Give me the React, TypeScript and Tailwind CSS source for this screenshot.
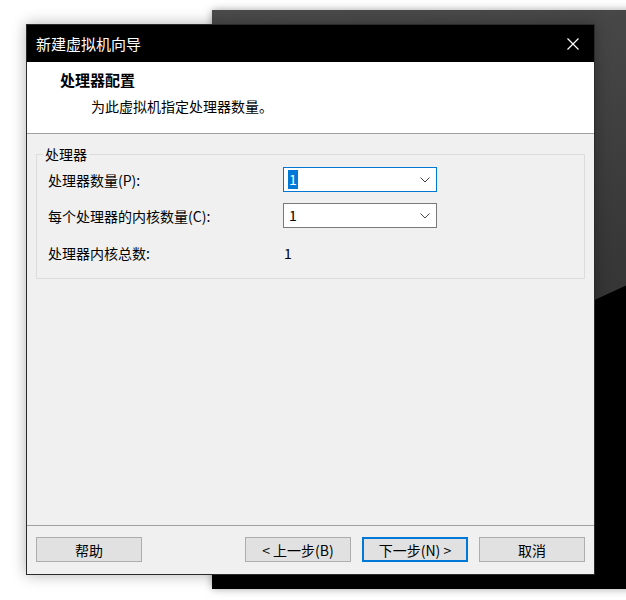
const font = "font-['Noto_Sans_CJK_SC','Noto_Sans',sans-serif]";

const Chevron = () => (
  <svg width="10" height="6" viewBox="0 0 10 6" className="text-[#444]">
    <path d="M0.5 0.5 L5 5 L9.5 0.5" fill="none" stroke="currentColor" strokeWidth="1" />
  </svg>
);

const Combo = ({ focused }: { focused?: boolean }) => (
  <div
    className={`w-[154px] h-[25px] bg-white border flex items-center justify-between pl-[4px] pr-[6px] ${
      focused ? "border-[#0078d7]" : "border-[#7a7a7a]"
    }`}
  >
    <span
      className={`text-[14px] leading-[19px] px-[1px] ${
        focused ? "bg-[#0078d7] text-white" : "text-black"
      }`}
    >
      1
    </span>
    <Chevron />
  </div>
);

const Button = ({ label, primary }: { label: string; primary?: boolean }) => (
  <button
    className={`w-[106px] h-[25px] bg-[#e1e1e1] text-[14px] leading-none text-black flex items-center justify-center ${
      primary ? "border-2 border-[#0078d7]" : "border border-[#adadad]"
    }`}
  >
    {label}
  </button>
);

export default function App() {
  return (
    <div className={`relative w-[626px] h-[600px] bg-white overflow-hidden ${font}`}>
      {/* window behind */}
      <div className="absolute left-[212px] top-[10px] w-[430px] h-[579px] bg-black shadow-[0_0_8px_rgba(0,0,0,0.35)]">
        <div className="absolute inset-0 bg-[linear-gradient(172deg,#4b4b4b_0%,#3a3a3a_40%,#252525_100%)] [clip-path:polygon(0_0,100%_0,100%_268px,0_467px)]" />
      </div>

      {/* wizard dialog */}
      <div className="absolute left-[26px] top-[24px] w-[569px] h-[551px] flex flex-col border border-[#2b2b2b] bg-[#f0f0f0] shadow-[0_0_14px_rgba(0,0,0,0.3)]">
        <div className="h-[37px] bg-black flex items-center justify-between pl-[9px] pr-[15px]">
          <span className="text-white text-[15px] leading-none">新建虚拟机向导</span>
          <svg width="12" height="12" viewBox="0 0 12 12">
            <path d="M0.5 0.5 L11.5 11.5 M11.5 0.5 L0.5 11.5" stroke="white" strokeWidth="1.2" />
          </svg>
        </div>

        <div className="h-[72px] bg-white border-b border-[#a0a0a0] pl-[33px] pt-[8px] flex flex-col">
          <span className="text-[15px] font-bold leading-[20px]">处理器配置</span>
          <span className="text-[14px] leading-[20px] pl-[31px] mt-[6px]">为此虚拟机指定处理器数量。</span>
        </div>

        <div className="flex-1 px-[9px] pt-[20px]">
          <div className="relative border border-[#dcdcdc] h-[125px] pt-[12px] pl-[11px] flex flex-col">
            <span className="absolute -top-[11px] left-[6px] px-[2px] bg-[#f0f0f0] text-[14px] leading-[20px]">
              处理器
            </span>
            <div className="flex items-center h-[25px]">
              <span className="w-[235px] text-[14px] leading-[20px]">处理器数量(P):</span>
              <Combo focused />
            </div>
            <div className="flex items-center h-[25px] mt-[11px]">
              <span className="w-[235px] text-[14px] leading-[20px]">每个处理器的内核数量(C):</span>
              <Combo />
            </div>
            <div className="flex items-center h-[25px] mt-[12px]">
              <span className="w-[235px] text-[14px] leading-[20px]">处理器内核总数:</span>
              <span className="text-[14px] leading-[20px] pl-[1px]">1</span>
            </div>
          </div>
        </div>

        <div className="border-t border-[#a0a0a0] h-[49px] flex items-start pt-[11px] px-[9px]">
          <Button label="帮助" />
          <div className="flex-1" />
          <div className="flex gap-[11px]">
            <Button label="< 上一步(B)" />
            <Button label="下一步(N) >" primary />
            <Button label="取消" />
          </div>
        </div>
      </div>
    </div>
  );
}
